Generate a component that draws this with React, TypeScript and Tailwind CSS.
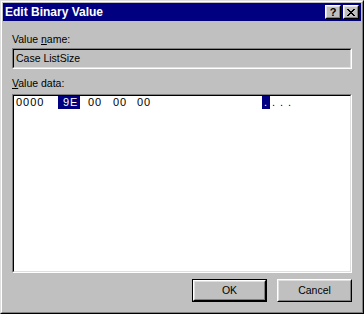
import React from "react";

const raised =
  "border border-t-white border-l-white border-r-black border-b-black";
const raisedInner =
  "border border-t-[#dfdfdf] border-l-[#dfdfdf] border-r-[#808080] border-b-[#808080]";
const sunken =
  "border border-t-[#808080] border-l-[#808080] border-r-white border-b-white";
const sunkenInner =
  "border border-t-black border-l-black border-r-[#dfdfdf] border-b-[#dfdfdf]";

function CloseGlyph() {
  const rows = [
    [0, 1, 6, 7],
    [1, 2, 5, 6],
    [2, 3, 4, 5],
    [3, 4],
    [2, 3, 4, 5],
    [1, 2, 5, 6],
    [0, 1, 6, 7],
  ];
  return (
    <svg width="8" height="7" viewBox="0 0 8 7" shapeRendering="crispEdges">
      {rows.map((cols, y) =>
        cols.map((x) => <rect key={`${x}-${y}`} x={x} y={y} width="1" height="1" fill="#000" />)
      )}
    </svg>
  );
}

function CaptionButton({ children }: { children: React.ReactNode }) {
  return (
    <div className={`h-[14px] w-[16px] bg-[#c0c0c0] ${raised}`}>
      <div className={`flex h-full w-full items-center justify-center ${raisedInner}`}>
        {children}
      </div>
    </div>
  );
}

function PushButton({ label, isDefault }: { label: string; isDefault?: boolean }) {
  return (
    <div className={`h-[23px] w-[75px] bg-[#c0c0c0] ${isDefault ? "border border-black" : ""}`}>
      <div className={`h-full w-full ${raised}`}>
        <div className={`flex h-full w-full items-center justify-center ${raisedInner}`}>
          {label}
        </div>
      </div>
    </div>
  );
}

export default function App() {
  return (
    <div className="h-[314px] w-[364px] border border-t-[#dfdfdf] border-l-[#dfdfdf] border-r-black border-b-black bg-[#c0c0c0] font-['Liberation_Sans',Arial,sans-serif] text-[10.5px] leading-[13px] text-black">
      <div className="flex h-full flex-col border border-t-white border-l-white border-r-[#808080] border-b-[#808080] p-px">
        {/* Title bar */}
        <div className="flex h-[18px] items-center justify-between bg-[#000080] pl-[2px] pr-[2px]">
          <span className="text-[12px] font-bold text-white">Edit Binary Value</span>
          <div className="flex gap-[2px]">
            <CaptionButton>
              <span className="text-[11px] font-bold leading-none">?</span>
            </CaptionButton>
            <CaptionButton>
              <CloseGlyph />
            </CaptionButton>
          </div>
        </div>

        <div className="flex flex-col px-[9px]">
          <div className="mt-[12px] h-[13px]">
            Value <span className="underline">n</span>ame:
          </div>
          <div className={`mt-[2px] h-[21px] ${sunken}`}>
            <div className={`h-full ${sunkenInner} pl-[2px] pt-[2px]`}>Case ListSize</div>
          </div>

          <div className="mt-[8px] h-[13px]">
            <span className="underline">V</span>alue data:
          </div>
          <div className={`mt-[4px] h-[179px] ${sunken}`}>
            <div className={`h-full bg-white ${sunkenInner} pl-[2px]`}>
              <div className="flex h-[13px] items-center text-[11px] tracking-[1px]">
                <span className="w-[42px]">0000</span>
                <span className="w-[22px] bg-[#000080] pl-[5px] text-white">9E</span>
                <span className="ml-[8px] w-[25px]">00</span>
                <span className="w-[24px]">00</span>
                <span className="w-[125px]">00</span>
                <span className="flex w-[8px] justify-center bg-[#000080] text-white">.</span>
                <span className="flex w-[8px] justify-center">.</span>
                <span className="flex w-[8px] justify-center">.</span>
                <span className="flex w-[8px] justify-center">.</span>
              </div>
            </div>
          </div>

          <div className="mt-[6px] flex justify-end gap-[10px]">
            <PushButton label="OK" isDefault />
            <PushButton label="Cancel" />
          </div>
        </div>
      </div>
    </div>
  );
}
